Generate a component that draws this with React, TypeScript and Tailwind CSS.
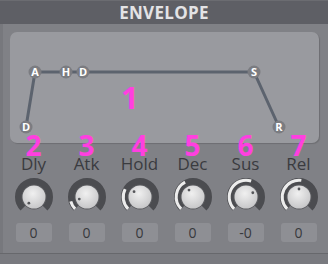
import React from 'react';

const Knobs = [
  { id: 2, label: 'Dly', value: '0', arc: -135, dot: -140 },
  { id: 3, label: 'Atk', value: '0', arc: -105, dot: -105 },
  { id: 4, label: 'Hold', value: '0', arc: -62, dot: -48 },
  { id: 5, label: 'Dec', value: '0', arc: -28, dot: -30 },
  { id: 6, label: 'Sus', value: '-0', arc: 18, dot: 58 },
  { id: 7, label: 'Rel', value: '0', arc: 8, dot: 0 },
];

const Points = [
  { id: 1, text: 'A', x: 25, y: 40 },
  { id: 2, text: 'H', x: 56, y: 40 },
  { id: 3, text: 'D', x: 73, y: 40 },
  { id: 4, text: 'S', x: 244, y: 40 },
  { id: 5, text: 'D', x: 16, y: 95 },
  { id: 6, text: 'R', x: 269, y: 95 },
];

const polar = (r: number, deg: number) => {
  const a = (deg * Math.PI) / 180;
  return [20 + r * Math.sin(a), 20 - r * Math.cos(a)];
};

const arcPath = (r: number, from: number, to: number) => {
  const [x1, y1] = polar(r, from);
  const [x2, y2] = polar(r, to);
  const large = to - from > 180 ? 1 : 0;
  return `M ${x1} ${y1} A ${r} ${r} 0 ${large} 1 ${x2} ${y2}`;
};

const Knob: React.FC<{ arc: number; dot: number }> = ({ arc, dot }) => {
  const [dx, dy] = polar(8, dot);
  return (
    <svg width="40" height="40" viewBox="0 0 40 40">
      <defs>
        <radialGradient id="knobFace" cx="45%" cy="35%" r="70%">
          <stop offset="0%" stopColor="#f0f0f0" />
          <stop offset="100%" stopColor="#c4c4c6" />
        </radialGradient>
      </defs>
      <path d={arcPath(15.5, -135, 135)} stroke="#4b4c50" strokeWidth="7" fill="none" />
      {arc > -133 && (
        <path d={arcPath(16.8, -135, arc)} stroke="#ececec" strokeWidth="3" fill="none" />
      )}
      <circle cx="20" cy="20" r="12.5" fill="#5a5b5f" />
      <circle cx="20" cy="20" r="11.5" fill="url(#knobFace)" />
      <circle cx={dx} cy={dy} r="1.4" fill="#55565a" />
    </svg>
  );
};

const App: React.FC = () => (
  <div className="w-[328px] h-[264px] bg-[#808186] font-['Open_Sans',sans-serif] overflow-hidden flex flex-col">
    <div className="h-[24px] bg-[#5e5f65] border-t border-[#6b6c71] flex items-center justify-center">
      <span className="text-[17px] font-bold text-[#e3e3e5] tracking-[0.3px] leading-none">ENVELOPE</span>
    </div>
    <div className="flex-1 flex flex-col border-l-[3px] border-[#77787d]">
      <div className="relative mt-[8px] ml-[7px] w-[309px] h-[111px] rounded-[7px] bg-[#999a9f] shadow-[1px_1px_1px_rgba(0,0,0,0.15)]">
        <svg width="309" height="111" className="absolute left-0 top-0">
          <polyline
            points="16,95 25,40 244,40 269,95"
            stroke="#5c636e"
            strokeWidth="3"
            fill="none"
          />
          {Points.map(p => (
            <g key={p.id}>
              <circle cx={p.x} cy={p.y} r="6.5" fill="#7b7c81" />
              <text
                x={p.x}
                y={p.y + 4}
                textAnchor="middle"
                fontSize="11"
                fontWeight="bold"
                fill="#ffffff"
                fontFamily="'Open Sans', sans-serif"
              >
                {p.text}
              </text>
            </g>
          ))}
        </svg>
        <div className="absolute left-[111px] top-[50px] text-[31px] font-bold leading-none text-[#ff3fe0]">
          1
        </div>
      </div>
      <div className="grid grid-cols-6 w-[318px] ml-[4px]">
        {Knobs.map(k => (
          <div key={k.id} className="relative flex flex-col items-center pt-[11px]">
            <div className="absolute top-[-12px] text-[28px] font-bold leading-none text-[#ff3fe0]">
              {k.id}
            </div>
            <div className="text-[17px] leading-[20px] text-[#3a3b3f]">{k.label}</div>
            <div className="mt-[3px]">
              <Knob arc={k.arc} dot={k.dot} />
            </div>
            <div className="mt-[6px] w-[36px] h-[19px] rounded-[3px] bg-[#8e8f94] flex items-center justify-center text-[14px] text-[#38393d]">
              {k.value}
            </div>
          </div>
        ))}
      </div>
    </div>
    <div className="h-[11px] bg-[#797a7f] border-t border-[#67686c]" />
  </div>
);

export default App;
